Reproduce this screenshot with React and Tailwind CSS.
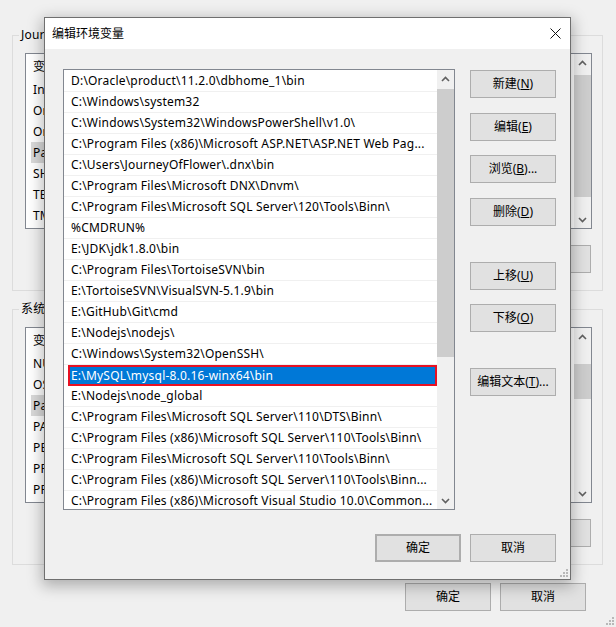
import React from "react";

const paths = [
  "D:\\Oracle\\product\\11.2.0\\dbhome_1\\bin",
  "C:\\Windows\\system32",
  "C:\\Windows\\System32\\WindowsPowerShell\\v1.0\\",
  "C:\\Program Files (x86)\\Microsoft ASP.NET\\ASP.NET Web Pag...",
  "C:\\Users\\JourneyOfFlower\\.dnx\\bin",
  "C:\\Program Files\\Microsoft DNX\\Dnvm\\",
  "C:\\Program Files\\Microsoft SQL Server\\120\\Tools\\Binn\\",
  "%CMDRUN%",
  "E:\\JDK\\jdk1.8.0\\bin",
  "C:\\Program Files\\TortoiseSVN\\bin",
  "E:\\TortoiseSVN\\VisualSVN-5.1.9\\bin",
  "E:\\GitHub\\Git\\cmd",
  "E:\\Nodejs\\nodejs\\",
  "C:\\Windows\\System32\\OpenSSH\\",
  "E:\\MySQL\\mysql-8.0.16-winx64\\bin",
  "E:\\Nodejs\\node_global",
  "C:\\Program Files\\Microsoft SQL Server\\110\\DTS\\Binn\\",
  "C:\\Program Files (x86)\\Microsoft SQL Server\\110\\Tools\\Binn\\",
  "C:\\Program Files\\Microsoft SQL Server\\110\\Tools\\Binn\\",
  "C:\\Program Files (x86)\\Microsoft SQL Server\\110\\Tools\\Binn...",
  "C:\\Program Files (x86)\\Microsoft Visual Studio 10.0\\Common...",
];

const userVars = ["IntelliJ IDEA", "OneDrive", "OneDriveConsumer", "Path", "SHELL", "TEMP", "TMP"];
const sysVars = ["NUMBER_OF_PROCESSORS", "OS", "Path", "PATHEXT", "PERL5LIB", "PROCESSOR_ARCHITECTURE", "PROCESSOR_IDENTIFIER"];

const Chevron = ({ up }) => (
  <svg width="9" height="6" viewBox="0 0 9 6" className="text-[#606060]">
    <path d={up ? "M1 5 L4.5 1.5 L8 5" : "M1 1 L4.5 4.5 L8 1"} fill="none" stroke="currentColor" strokeWidth="1.6" />
  </svg>
);

const Grip = () => (
  <svg width="10" height="10" viewBox="0 0 10 10">
    {[
      [8, 2], [8, 5], [5, 5], [8, 8], [5, 8], [2, 8],
    ].map(([x, y]) => (
      <rect key={`${x}-${y}`} x={x} y={y} width="2" height="2" fill="#b8b8b8" />
    ))}
  </svg>
);

const Btn = ({ children, className = "" }) => (
  <div className={`h-[28px] w-[86px] flex items-center justify-center bg-[#e1e1e1] border border-[#adadad] text-[12px] text-black ${className}`}>
    {children}
  </div>
);

// list of variables in the parent window; the dialog covers all but its edges
const VarList = ({ items, thumbTop, thumbH }) => (
  <div className="h-[176px] ml-[12px] mr-[10px] border border-[#828790] bg-white flex text-[12px] tracking-[0.2px]">
    <div className="w-[18px] flex flex-col overflow-hidden">
      <div className="h-[25px] flex items-center pl-[7px] whitespace-nowrap">变量</div>
      {items.map((v) => (
        <div key={v} className={`h-[21px] flex items-center pl-[2px] ml-[5px] whitespace-nowrap ${v === "Path" ? "bg-[#d9d9d9]" : ""}`}>
          {v}
        </div>
      ))}
    </div>
    <div className="flex-1" />
    <div className="w-[17px] bg-[#f0f0f0] flex flex-col items-center">
      <div className="h-[17px] flex items-center justify-center"><Chevron up /></div>
      <div className="flex-1 w-full">
        <div className="w-full bg-[#cdcdcd]" style={{ marginTop: thumbTop, height: thumbH }} />
      </div>
      <div className="h-[17px] flex items-center justify-center"><Chevron /></div>
    </div>
  </div>
);

const Group = ({ label, items, thumbTop, thumbH, className = "" }) => (
  <div className={`relative ml-[12px] mr-[13px] border border-[#dcdcdc] h-[256px] flex flex-col ${className}`}>
    <span className="absolute left-[6px] -top-[9px] w-[25px] overflow-hidden whitespace-nowrap px-[2px] bg-[#f0f0f0] leading-[16px] text-[12px] tracking-[0.2px]">{label}</span>
    <div className="pt-[17px]">
      <VarList items={items} thumbTop={thumbTop} thumbH={thumbH} />
    </div>
    <div className="flex justify-end gap-[9px] mt-[16px] mr-[11px]">
      <Btn className="h-[27px] w-[23px]" />
    </div>
  </div>
);

export default function App() {
  return (
    <div
      className="relative w-[616px] h-[627px] overflow-hidden bg-[#f0f0f0] text-[12px] text-black"
      style={{ fontFamily: '"Noto Sans", "Noto Sans CJK SC", sans-serif' }}
    >
      {/* parent window */}
      <div className="pt-[35px] flex flex-col">
        <Group label="JourneyOfFlower 的用户变量(U)" items={userVars} thumbTop={4} thumbH={122} />
        <Group label="系统变量(S)" items={sysVars} thumbTop={19} thumbH={35} className="mt-[18px]" />
        <div className="flex justify-end gap-[9px] mt-[18px] mr-[30px]">
          <Btn className="h-[28px]">确定</Btn>
          <Btn className="h-[28px]">取消</Btn>
        </div>
        <div className="absolute right-[2px] bottom-[2px]"><Grip /></div>
      </div>

      {/* edit dialog */}
      <div className="absolute left-[44px] top-[17px] w-[527px] h-[563px] border border-[#6f6f6f] bg-[#f0f0f0] shadow-[0_4px_14px_2px_rgba(0,0,0,0.28)] flex flex-col">
        <div className="h-[31px] bg-white flex items-center justify-between pl-[7px] pr-[9px]">
          <span className="text-[12px]">编辑环境变量</span>
          <svg width="11" height="11" viewBox="0 0 11 11">
            <path d="M0.5 0.5 L10.5 10.5 M10.5 0.5 L0.5 10.5" stroke="#111" strokeWidth="1" />
          </svg>
        </div>
        <div className="flex-1 flex flex-col pl-[18px] pt-[20px] relative">
          <div className="flex gap-[15px]">
            <div className="w-[392px] h-[441px] border border-[#828790] bg-white flex text-[12px] tracking-[0.2px]">
              <div className="flex-1 flex flex-col overflow-hidden pt-[1px]">
                {paths.map((p, i) =>
                  i === 14 ? (
                    <div key={p} className="h-[21px] shrink-0 ml-[4px] border-2 border-[#e81123] bg-[#0078d7] text-white flex items-center pl-[1px] whitespace-nowrap">
                      {p}
                    </div>
                  ) : (
                    <div key={p} className="h-[21px] shrink-0 border-b border-[#f0f0f0] flex items-center pl-[7px] whitespace-nowrap overflow-hidden">
                      {p}
                    </div>
                  )
                )}
              </div>
              <div className="w-[17px] bg-[#f0f0f0] flex flex-col">
                <div className="h-[17px] flex items-center justify-center"><Chevron up /></div>
                <div className="flex-1">
                  <div className="w-full h-[268px] mt-[2px] bg-[#cdcdcd]" />
                </div>
                <div className="h-[17px] flex items-center justify-center"><Chevron /></div>
              </div>
            </div>
            <div className="flex flex-col pt-[1px]">
              <Btn>新建(<u>N</u>)</Btn>
              <Btn className="mt-[15px]">编辑(<u>E</u>)</Btn>
              <Btn className="mt-[14px]">浏览(<u>B</u>)...</Btn>
              <Btn className="mt-[15px]">删除(<u>D</u>)</Btn>
              <Btn className="mt-[36px]">上移(<u>U</u>)</Btn>
              <Btn className="mt-[14px]">下移(<u>O</u>)</Btn>
              <Btn className="mt-[36px]">编辑文本(<u>T</u>)...</Btn>
            </div>
          </div>
          <div className="flex justify-end gap-[9px] mt-[24px] mr-[14px]">
            <Btn className="border-2 border-[#0078d7]">确定</Btn>
            <Btn>取消</Btn>
          </div>
          <div className="absolute right-[2px] bottom-[2px]"><Grip /></div>
        </div>
      </div>
    </div>
  );
}
